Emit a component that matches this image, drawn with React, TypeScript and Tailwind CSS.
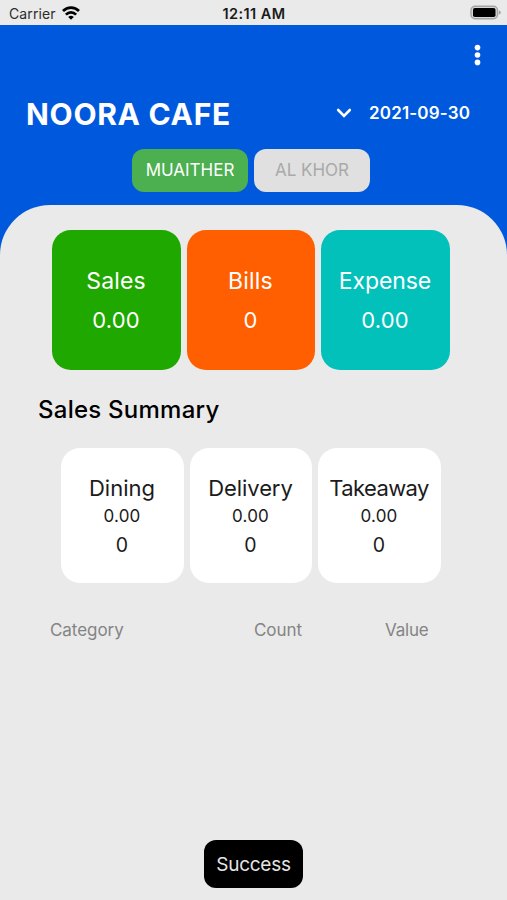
import clsx from "clsx";

const totals = [
    { label: "Sales", value: "0.00", color: "bg-[#1fa800]", spacing: "tracking-[0.1px]" },
    { label: "Bills", value: "0", color: "bg-[#ff5f00]", spacing: "tracking-[0.2px]" },
    { label: "Expense", value: "0.00", color: "bg-[#02c1ba]", spacing: "tracking-[-0.1px]" },
];

const summary = [
    { label: "Dining", amount: "0.00", count: "0", spacing: "tracking-normal" },
    { label: "Delivery", amount: "0.00", count: "0", spacing: "tracking-[-0.1px]" },
    { label: "Takeaway", amount: "0.00", count: "0", spacing: "tracking-[-0.6px]" },
];

function StatusBar() {
    return (
        <div className="flex h-[25px] shrink-0 items-center justify-between bg-[#eaeaea] pr-[6px] pl-[9px] text-[#1a1a1a]">
            <div className="flex w-[120px] items-center gap-[6px] pt-[3px]">
                <span className="text-[14px] leading-5 tracking-[0.1px] text-[#2c2c2c]">Carrier</span>
                <svg width="18" height="14" viewBox="0 0 18 14" className="mb-[3px] text-black" fill="none" stroke="currentColor" strokeWidth="2.7">
                    <path d="M1 5C5.4.5 12.6.5 17 5" />
                    <path d="M3.900 8.600C6.800 5.700 11.200 5.700 14.100 8.600" />
                    <path d="M9 13.800 6.200 11Q9 8.700 11.800 11Z" fill="currentColor" stroke="none" />
                </svg>
            </div>
            <span className="pt-[3px] pr-[2px] text-[14.5px] leading-5 font-semibold tracking-[0.4px]">12:11 AM</span>
            <div className="flex w-[120px] justify-end">
                <svg width="31" height="15" viewBox="0 0 31 15">
                    <rect x="1" y="1.2" width="26.5" height="12.6" rx="4" fill="#d6d6d6" stroke="#a3a3a3" strokeWidth="1.4" />
                    <rect x="3" y="3" width="22.5" height="9" rx="1.8" fill="#000" />
                    <path d="M28.8 5.2Q30.800 6 30.800 7.500T28.800 9.800Z" fill="#a3a3a3" />
                </svg>
            </div>
        </div>
    );
}

function Header() {
    return (
        <header className="flex h-[180px] shrink-0 flex-col text-white">
            <div className="flex h-[59px] items-center justify-end pr-[26px]">
                <svg width="7" height="22" viewBox="0 0 7 22" fill="currentColor">
                    <circle cx="3.5" cy="3.6" r="2.8" />
                    <circle cx="3.5" cy="11" r="2.8" />
                    <circle cx="3.5" cy="18.4" r="2.8" />
                </svg>
            </div>
            <div className="flex h-[58px] items-center justify-between pr-[37px] pl-[26px]">
                <h1 className="pt-px text-[30px] leading-9 font-bold tracking-[0.7px]">NOORA CAFE</h1>
                <div className="flex items-center gap-[17px]">
                    <svg width="16" height="10" viewBox="0 0 16 10" fill="none" stroke="currentColor" strokeWidth="2.6" strokeLinecap="round">
                        <path d="M2.2 2 8 7.8 13.8 2" />
                    </svg>
                    <span className="text-[17px] leading-6 font-semibold tracking-[0.15px]">2021-09-30</span>
                </div>
            </div>
            <div className="flex justify-center gap-[6px] pt-[6.5px] pr-[5px] text-[17px]">
                <button className="h-[43px] w-[116px] rounded-[12px] bg-[#4caf50] pt-px">MUAITHER</button>
                <button className="h-[43px] w-[116px] rounded-[12px] bg-[#e0e0e0] pt-px text-[#a9a9a9]">AL KHOR</button>
            </div>
        </header>
    );
}

export default function App() {
    return (
        <div className="flex h-[900px] w-[507px] flex-col overflow-hidden bg-[#0059dd] font-['Inter',sans-serif]">
            <StatusBar />
            <Header />
            <main className="flex flex-1 flex-col rounded-t-[50px] bg-[#eaeaea]">
                <div className="flex justify-center gap-[6px] pt-[24.5px] pr-[5px]">
                    {totals.map((item) => (
                        <div
                            key={item.label}
                            className={clsx("flex h-[140.5px] w-[128.5px] flex-col items-center rounded-[19px] pt-[31px] pr-px text-white", item.color)}
                        >
                            <span className={clsx("text-[23px] leading-[40px]", item.spacing)}>{item.label}</span>
                            <span className="text-[22px] leading-[39px] tracking-[0.2px]">{item.value}</span>
                        </div>
                    ))}
                </div>

                <h2 className="pt-[24.5px] pl-[38px] text-[24px] leading-[30px] font-medium tracking-[0.25px] text-black">Sales Summary</h2>

                <div className="flex justify-center gap-[6px] pt-[23.5px] pr-[5px]">
                    {summary.map((item) => (
                        <div key={item.label} className="flex h-[134.5px] w-[122.5px] flex-col items-center rounded-[19px] bg-white pt-[26px] pr-px text-[#1b1b1b]">
                            <span className={clsx("text-[22px] leading-[28px]", item.spacing)}>{item.label}</span>
                            <span className="text-[17px] leading-[28.5px] tracking-[0.2px]">{item.amount}</span>
                            <span className="text-[19.5px] leading-[28.5px]">{item.count}</span>
                        </div>
                    ))}
                </div>

                <div className="flex pt-[35px] pl-[50px] text-[17px] leading-[24px] tracking-[-0.05px] text-[#848484]">
                    <span className="w-[204px]">Category</span>
                    <span className="w-[131px]">Count</span>
                    <span className="tracking-[-0.2px]">Value</span>
                </div>

                <div className="mt-auto mb-[12px] flex h-[48.5px] w-[99.5px] items-center justify-center self-center rounded-[12px] bg-black pt-[2px] text-[19px] tracking-[-0.25px] text-[#e4e4e4]">
                    Success
                </div>
            </main>
        </div>
    );
}
